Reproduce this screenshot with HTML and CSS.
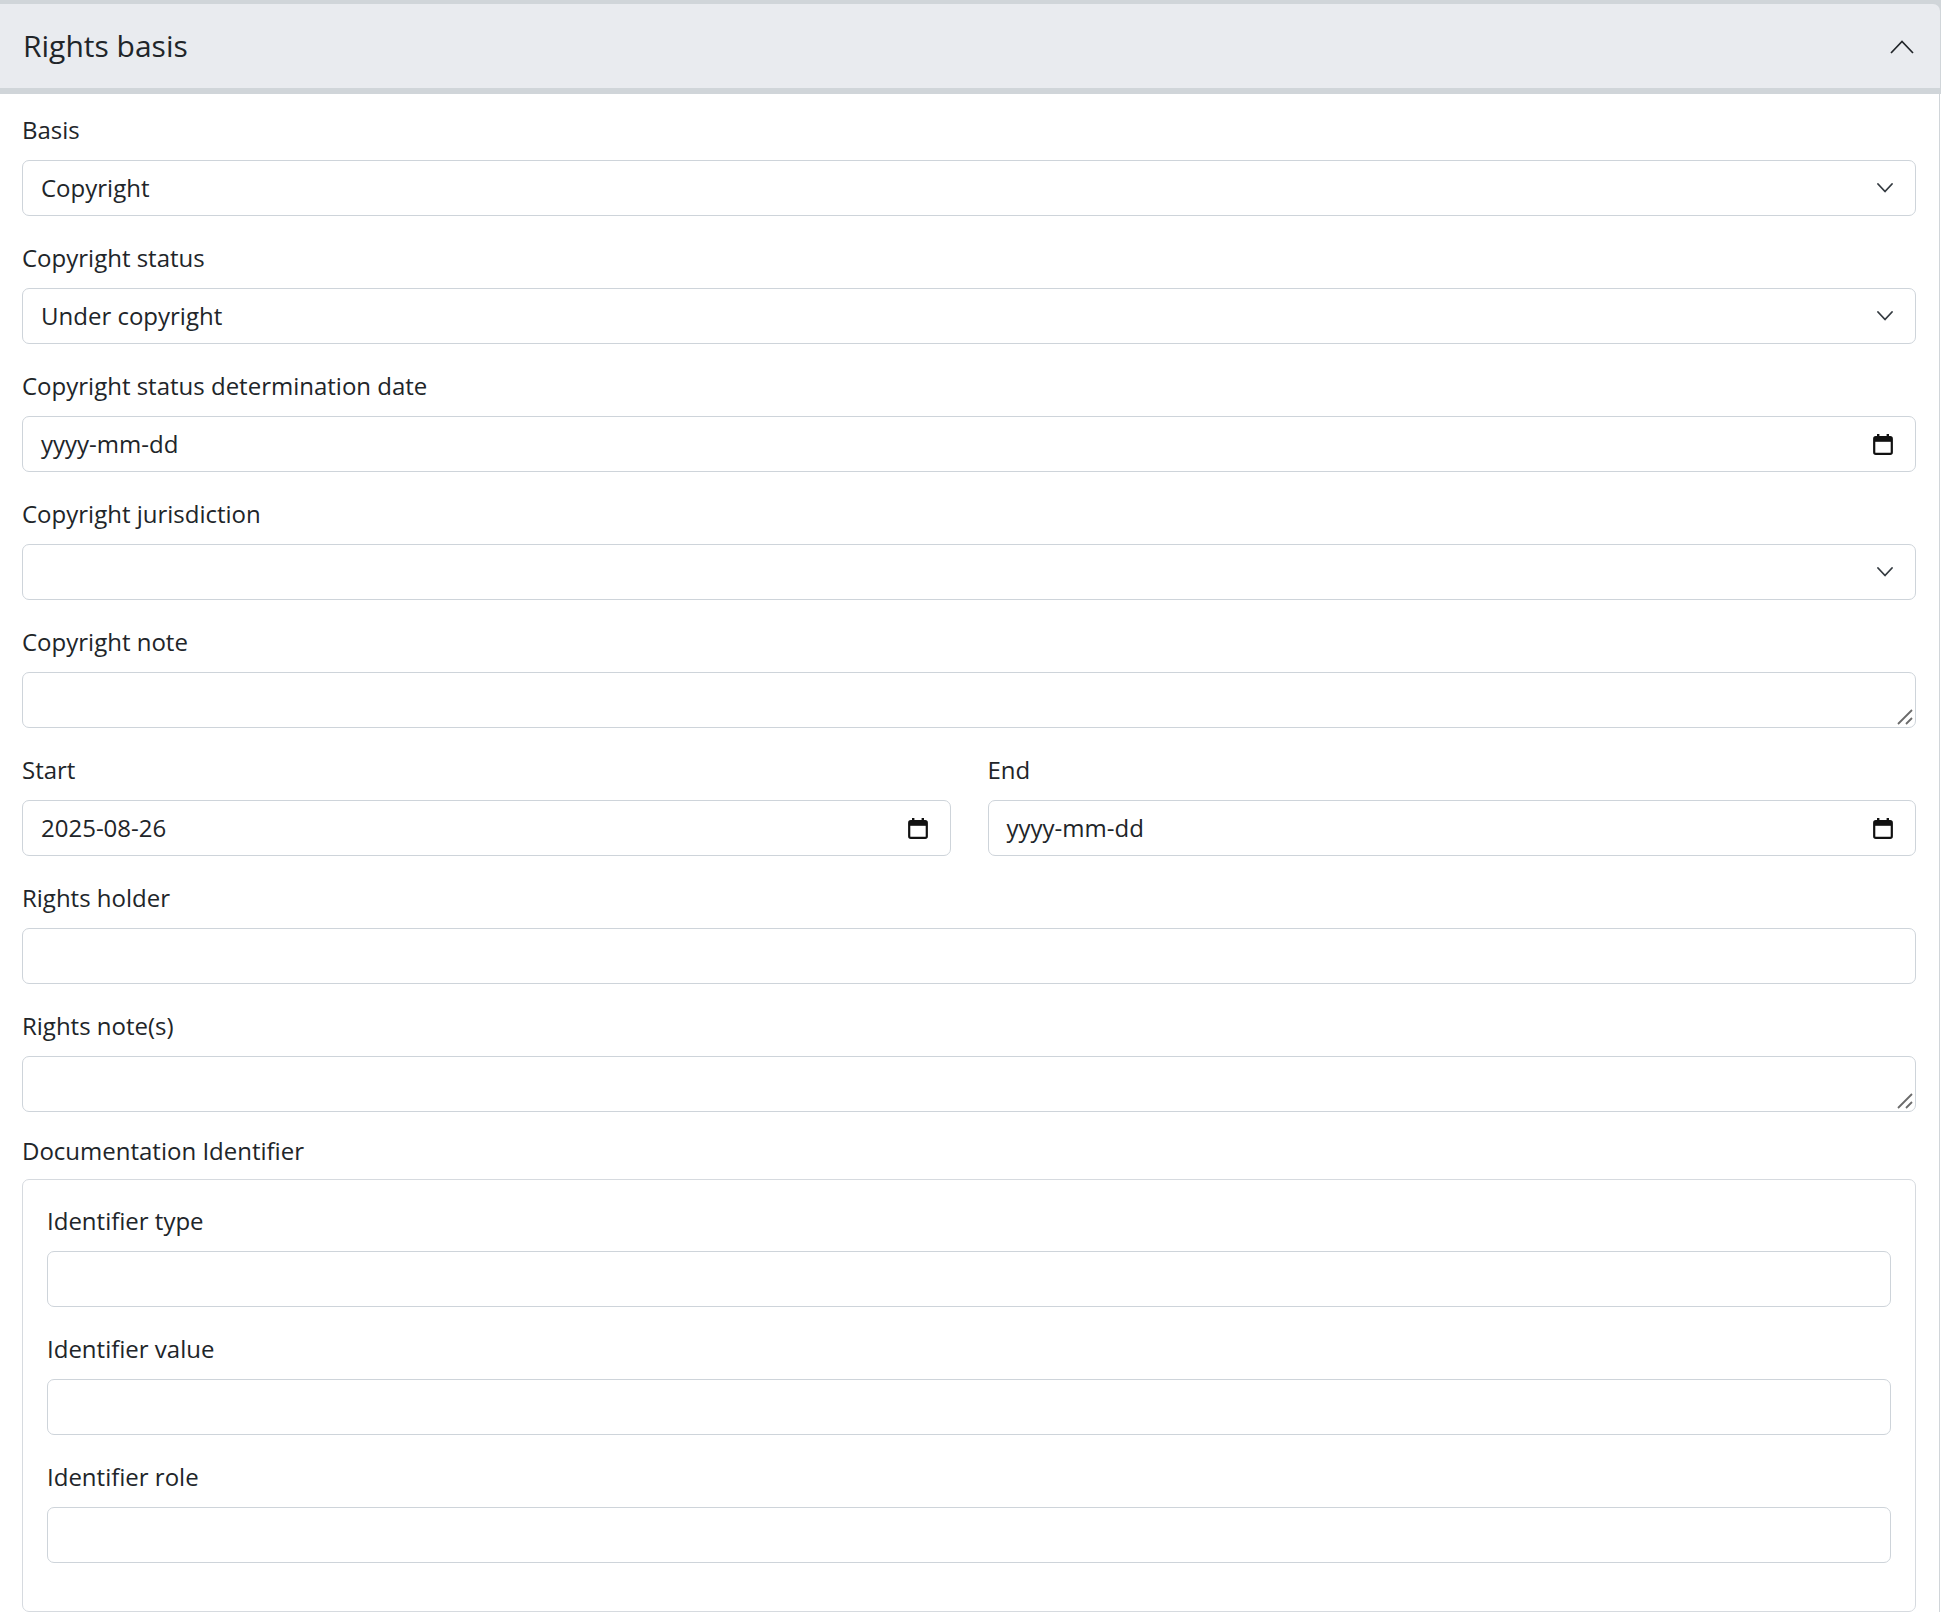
FILE: index.html
```html
<!DOCTYPE html>
<html>

<head>
  <link rel="stylesheet" href="styles.css">
</head>

<body>
  <div class="panel">
    <div class="panel-top">
      <div class="panel-header">
        <h5 class="panel-title">Rights basis</h5>
        <svg class="toggle-icon" width="24" height="14" viewBox="0 0 24 14">
          <path d="M1 13 L12 1.5 L23 13" fill="none" stroke="#212529" stroke-width="1.7" />
        </svg>
      </div>
    </div>

    <div class="panel-body">
      <div class="field">
        <label class="field-label">Basis</label>
        <div class="control select">
          <select>
            <option>Copyright</option>
          </select>
          <svg class="chevron" width="16" height="10" viewBox="0 0 16 10">
            <path d="M1 1 L8 8.5 L15 1" fill="none" stroke="#343a40" stroke-width="1.8" stroke-linecap="round" stroke-linejoin="round" />
          </svg>
        </div>
      </div>

      <div class="field">
        <label class="field-label">Copyright status</label>
        <div class="control select">
          <select>
            <option>Under copyright</option>
          </select>
          <svg class="chevron" width="16" height="10" viewBox="0 0 16 10">
            <path d="M1 1 L8 8.5 L15 1" fill="none" stroke="#343a40" stroke-width="1.8" stroke-linecap="round" stroke-linejoin="round" />
          </svg>
        </div>
      </div>

      <div class="field">
        <label class="field-label">Copyright status determination date</label>
        <div class="control date">
          <span>yyyy-mm-dd</span>
          <svg class="calendar" width="20" height="21" viewBox="0 0 20 21">
            <rect x="4" y="0" width="2.4" height="4" fill="#111" />
            <rect x="13.6" y="0" width="2.4" height="4" fill="#111" />
            <rect x="1.2" y="3.2" width="17.6" height="16.6" rx="1.6" fill="none" stroke="#111" stroke-width="2.2" />
            <rect x="1.2" y="3.2" width="17.6" height="4.6" fill="#111" />
          </svg>
        </div>
      </div>

      <div class="field">
        <label class="field-label">Copyright jurisdiction</label>
        <div class="control select">
          <select>
            <option></option>
          </select>
          <svg class="chevron" width="16" height="10" viewBox="0 0 16 10">
            <path d="M1 1 L8 8.5 L15 1" fill="none" stroke="#343a40" stroke-width="1.8" stroke-linecap="round" stroke-linejoin="round" />
          </svg>
        </div>
      </div>

      <div class="field">
        <label class="field-label">Copyright note</label>
        <div class="textarea-wrap">
          <textarea class="control textarea"></textarea>
          <svg class="grip" width="16" height="16" viewBox="0 0 16 16">
            <path d="M1 15 L15 1 M9 15 L15 9" stroke="#6b6b6b" stroke-width="1.8" />
          </svg>
        </div>
      </div>

      <div class="field-row">
        <div class="field">
          <label class="field-label">Start</label>
          <div class="control date">
            <span>2025-08-26</span>
            <svg class="calendar" width="20" height="21" viewBox="0 0 20 21">
              <rect x="4" y="0" width="2.4" height="4" fill="#111" />
              <rect x="13.6" y="0" width="2.4" height="4" fill="#111" />
              <rect x="1.2" y="3.2" width="17.6" height="16.6" rx="1.6" fill="none" stroke="#111" stroke-width="2.2" />
              <rect x="1.2" y="3.2" width="17.6" height="4.6" fill="#111" />
            </svg>
          </div>
        </div>
        <div class="field">
          <label class="field-label">End</label>
          <div class="control date">
            <span>yyyy-mm-dd</span>
            <svg class="calendar" width="20" height="21" viewBox="0 0 20 21">
              <rect x="4" y="0" width="2.4" height="4" fill="#111" />
              <rect x="13.6" y="0" width="2.4" height="4" fill="#111" />
              <rect x="1.2" y="3.2" width="17.6" height="16.6" rx="1.6" fill="none" stroke="#111" stroke-width="2.2" />
              <rect x="1.2" y="3.2" width="17.6" height="4.6" fill="#111" />
            </svg>
          </div>
        </div>
      </div>

      <div class="field">
        <label class="field-label">Rights holder</label>
        <input class="control" type="text">
      </div>

      <div class="field">
        <label class="field-label">Rights note(s)</label>
        <div class="textarea-wrap">
          <textarea class="control textarea"></textarea>
          <svg class="grip" width="16" height="16" viewBox="0 0 16 16">
            <path d="M1 15 L15 1 M9 15 L15 9" stroke="#6b6b6b" stroke-width="1.8" />
          </svg>
        </div>
      </div>

      <div class="field-group">
        <div class="group-label">Documentation Identifier</div>
        <div class="group-box">
          <div class="field">
            <label class="field-label">Identifier type</label>
            <input class="control" type="text">
          </div>
          <div class="field">
            <label class="field-label">Identifier value</label>
            <input class="control" type="text">
          </div>
          <div class="field">
            <label class="field-label">Identifier role</label>
            <input class="control" type="text">
          </div>
        </div>
      </div>
    </div>
  </div>
</body>

</html>
```

FILE: styles.css
```css
* {
  box-sizing: border-box;
}

body {
  margin: 0;
  font-family: "Open Sans", "Liberation Sans", sans-serif;
  font-size: 24px;
  line-height: 1.5;
  color: #212529;
  background-color: #fff;
}

.panel {
  width: 1941px;
}

.panel-top {
  background-color: #d0d5d9;
  padding: 4px 1px 6px 0;
}

.panel-header {
  height: 84px;
  display: flex;
  align-items: center;
  justify-content: space-between;
  padding: 0 26px 1px 23px;
  background-color: #e9ebef;
  border-top-right-radius: 7px;
}

.panel-title {
  margin: 0;
  font-size: 30px;
  font-weight: 400;
  line-height: 1.2;
}

.toggle-icon {
  display: block;
  margin-top: 2px;
}

.panel-body {
  width: 1940px;
  padding: 18px 23px 0 22px;
  border-right: 1px solid #d0d5d9;
}

.field {
  margin-bottom: 24px;
}

.field-label {
  display: block;
  margin-bottom: 12px;
}

.control {
  display: block;
  width: 100%;
  height: 56px;
  padding: 0 18px;
  border: 1px solid #ced4da;
  border-radius: 7px;
  background-color: #fff;
  font: inherit;
  color: inherit;
  outline: none;
}

.select,
.date {
  display: flex;
  align-items: center;
  padding-right: 22px;
}

.select select {
  flex: 1;
  height: 100%;
  padding: 0;
  border: none;
  background: transparent;
  font: inherit;
  color: inherit;
  appearance: none;
  outline: none;
}

.chevron {
  display: block;
  flex: none;
  margin-left: 10px;
}

.date span {
  flex: 1;
}

.calendar {
  display: block;
  flex: none;
}

.textarea-wrap {
  position: relative;
}

.textarea {
  padding: 9px 18px;
  resize: none;
}

.grip {
  position: absolute;
  right: 3px;
  bottom: 3px;
  pointer-events: none;
}

.field-row {
  display: grid;
  grid-template-columns: 1fr 1fr;
  column-gap: 37px;
}

.group-label {
  margin-top: -3px;
  margin-bottom: 9.5px;
}

.group-box {
  padding: 23px 24px 24px;
  border: 1px solid #d6dadf;
  border-radius: 7px;
}
```
